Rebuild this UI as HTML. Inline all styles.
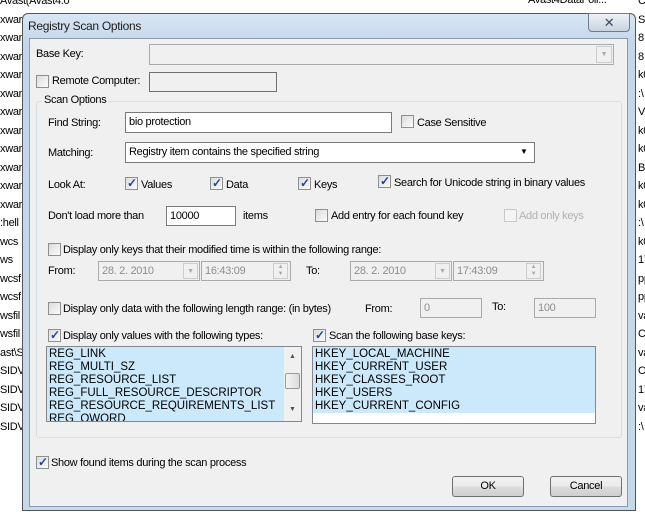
<!DOCTYPE html>
<html><head><meta charset="utf-8"><style>
*{margin:0;padding:0;box-sizing:border-box}
html,body{overflow:hidden}
body{width:645px;height:512px;position:relative;overflow:hidden;background:#fff;font-family:"Liberation Sans",sans-serif;font-size:11px;letter-spacing:-0.3px;color:#000}
.a{position:absolute;white-space:nowrap}
.t{margin-top:1px}
.bg{position:absolute;font-size:11px;color:#000;line-height:18.5px}
.frame{position:absolute;left:22px;top:13px;width:614px;height:498px;background:linear-gradient(#d9e6f3,#c4d6ea 30px,#c7d8ea);border:1px solid #555;border-radius:6px 6px 0 0}
.client{position:absolute;left:29px;top:38px;width:599px;height:469px;background:#f0f0f0;border:1px solid #8a9bb0}
.cb{position:absolute;width:13px;height:13px;border:1px solid #8e8f8f;background:linear-gradient(135deg,#dcdcdc,#fbfbfb)}
.cb.on::after{content:"✓";position:absolute;left:1px;top:-2px;font-size:12px;font-weight:bold;color:#21449c}
.cb.dis{border-color:#c8c8c8;background:#f4f4f4}
.in{position:absolute;background:#fff;border:1px solid #7a7a7a;padding:3px 3px 2px;font-size:11px}
.dis2{background:#f0f0f0;border-color:#aaa;color:#8d8d8d}
.gray{color:#8d8d8d}
.btn{position:absolute;width:72px;height:21px;border:1px solid #707070;border-radius:3px;background:linear-gradient(#f2f2f2,#ebebeb 50%,#dddddd 51%,#cfcfcf);text-align:center;line-height:19px}
.list{position:absolute;background:#fff;border:1px solid #828790;font-size:11.5px;line-height:13px;letter-spacing:0}
.sel{background:#cce8fb;padding-left:2px}
</style></head><body>
<div class="bg" style="left:0;top:-8px">Avast(Avast4.0<br>xwar<br>xwar<br>xwar<br>xwar<br>xwar<br>xwar<br>xwar<br>xwar<br>xwar<br>xwar<br>xwar<br>:hell<br>wcs<br>ws<br>wcsf<br>wcsf<br>wsfil<br>wsfil<br>ast\S<br>SIDV<br>SIDV<br>SIDV<br>SIDV</div>
<div class="bg" style="left:638px;top:-8px">C:<br>S\<br>8<br>8<br>k0<br>:\<br>V_<br>k0<br>k0<br>B<br>k0<br>k0<br>:\<br>k0<br>17<br>pp<br>pp<br>va<br>C:<br>va<br>C:<br>17<br>va<br>:\</div>
<div class="a" style="left:528px;top:-6px;font-size:11px">Avast4DataFoll...</div>
<div class="frame"></div>
<div class="a" style="left:588px;top:13px;width:42px;height:19px;border:1px solid #6d7c90;border-radius:0 0 4px 4px;background:linear-gradient(#eef2f7,#c8d3e0);text-align:center;font-size:13px;color:#3a4a60;line-height:17px">✕</div>
<div class="a" style="left:28px;top:19px;font-size:12px;color:#1e1e1e">Registry Scan Options</div>
<div class="client"></div>

<div class="a t" style="left:36px;top:47px">Base Key:</div>
<div class="in dis2" style="left:149px;top:44px;width:465px;height:21px"></div>
<div class="a" style="left:596px;top:46px;width:16px;height:17px;border:1px solid #ccc;text-align:center;font-size:7px;color:#aaa;line-height:16px">▼</div>

<div class="cb" style="left:36px;top:75px"></div>
<div class="a t" style="left:52px;top:74px">Remote Computer:</div>
<div class="in dis2" style="left:149px;top:72px;width:128px;height:20px;border-color:#6f6f6f"></div>

<div class="a" style="left:36px;top:101px;width:586px;height:337px;border:1px solid #d5dfe5;border-radius:3px"></div>
<div class="a" style="left:42px;top:94px;background:#f0f0f0;padding:0 2px">Scan Options</div>

<div class="a t" style="left:48px;top:116px">Find String:</div>
<div class="in" style="left:125px;top:112px;width:267px;height:21px">bio protection</div>
<div class="cb" style="left:401px;top:115px"></div>
<div class="a t" style="left:417px;top:116px">Case Sensitive</div>

<div class="a t" style="left:48px;top:146px">Matching:</div>
<div class="in" style="left:125px;top:142px;width:410px;height:21px">Registry item contains the specified string</div>
<div class="a" style="left:520px;top:147px;font-size:8px">▼</div>

<div class="a t" style="left:48px;top:178px">Look At:</div>
<div class="cb on" style="left:125px;top:177px"></div><div class="a t" style="left:141px;top:178px">Values</div>
<div class="cb on" style="left:210px;top:177px"></div><div class="a t" style="left:226px;top:178px">Data</div>
<div class="cb on" style="left:298px;top:177px"></div><div class="a t" style="left:314px;top:178px">Keys</div>
<div class="cb on" style="left:378px;top:175px"></div><div class="a t" style="left:394px;top:176px">Search for Unicode string in binary values</div>

<div class="a t" style="left:48px;top:209px">Don't load more than</div>
<div class="in" style="left:166px;top:206px;width:70px;height:20px">10000</div>
<div class="a t" style="left:243px;top:209px">items</div>
<div class="cb" style="left:315px;top:209px"></div><div class="a t" style="left:331px;top:209px">Add entry for each found key</div>
<div class="cb dis" style="left:504px;top:209px"></div><div class="a t" style="left:519px;top:209px;color:#b0b0b0">Add only keys</div>

<div class="cb" style="left:48px;top:243px"></div>
<div class="a t" style="left:63px;top:243px">Display only keys that their modified time is within the following range:</div>
<div class="a t" style="left:48px;top:264px">From:</div>
<div class="in dis2" style="left:98px;top:261px;width:102px;height:20px">28. 2. 2010</div>
<div class="a" style="left:183px;top:263px;width:15px;height:16px;border:1px solid #ccc;font-size:7px;color:#aaa;text-align:center;line-height:15px">▼</div>
<div class="in dis2" style="left:201px;top:261px;width:90px;height:20px">16:43:09</div>
<div class="a" style="left:273px;top:263px;width:15px;height:16px;border:1px solid #ccc;font-size:6px;color:#aaa;text-align:center;line-height:7px">▲<br>▼</div>
<div class="a t" style="left:306px;top:264px">To:</div>
<div class="in dis2" style="left:350px;top:261px;width:102px;height:20px">28. 2. 2010</div>
<div class="a" style="left:435px;top:263px;width:15px;height:16px;border:1px solid #ccc;font-size:7px;color:#aaa;text-align:center;line-height:15px">▼</div>
<div class="in dis2" style="left:453px;top:261px;width:91px;height:20px">17:43:09</div>
<div class="a" style="left:526px;top:263px;width:15px;height:16px;border:1px solid #ccc;font-size:6px;color:#aaa;text-align:center;line-height:7px">▲<br>▼</div>

<div class="cb" style="left:48px;top:302px"></div>
<div class="a t" style="left:63px;top:302px">Display only data with the following length range: (in bytes)</div>
<div class="a t" style="left:365px;top:302px">From:</div>
<div class="in dis2" style="left:420px;top:298px;width:62px;height:20px">0</div>
<div class="a t" style="left:492px;top:300px">To:</div>
<div class="in dis2" style="left:534px;top:298px;width:62px;height:20px">100</div>

<div class="cb on" style="left:48px;top:329px"></div>
<div class="a t" style="left:63px;top:329px">Display only values with the following types:</div>
<div class="cb on" style="left:313px;top:329px"></div>
<div class="a t" style="left:329px;top:329px">Scan the following base keys:</div>

<div class="list" style="left:46px;top:346px;width:256px;height:76px;overflow:hidden">
<div class="sel" style="width:238px;height:74px;padding-top:1px">REG_LINK<br>REG_MULTI_SZ<br>REG_RESOURCE_LIST<br>REG_FULL_RESOURCE_DESCRIPTOR<br>REG_RESOURCE_REQUIREMENTS_LIST<br>REG_QWORD</div>
<div class="a" style="right:0;top:0;width:17px;height:74px;background:#f0f0f0;font-size:7px;color:#555;text-align:center">
<div style="margin-top:3px">▲</div>
<div style="margin:10px 1px 0;height:16px;border:1px solid #999;border-radius:2px;background:linear-gradient(90deg,#f4f4f4,#dcdcdc)"></div>
<div style="margin-top:14px">▼</div></div>
</div>
<div class="list" style="left:312px;top:346px;width:284px;height:78px">
<div class="sel" style="height:66px;padding-top:1px">HKEY_LOCAL_MACHINE<br>HKEY_CURRENT_USER<br>HKEY_CLASSES_ROOT<br>HKEY_USERS<br>HKEY_CURRENT_CONFIG</div>
</div>

<div class="cb on" style="left:36px;top:456px"></div>
<div class="a t" style="left:51px;top:456px">Show found items during the scan process</div>

<div class="btn" style="left:452px;top:476px">OK</div>
<div class="btn" style="left:550px;top:476px">Cancel</div>
</body></html>
